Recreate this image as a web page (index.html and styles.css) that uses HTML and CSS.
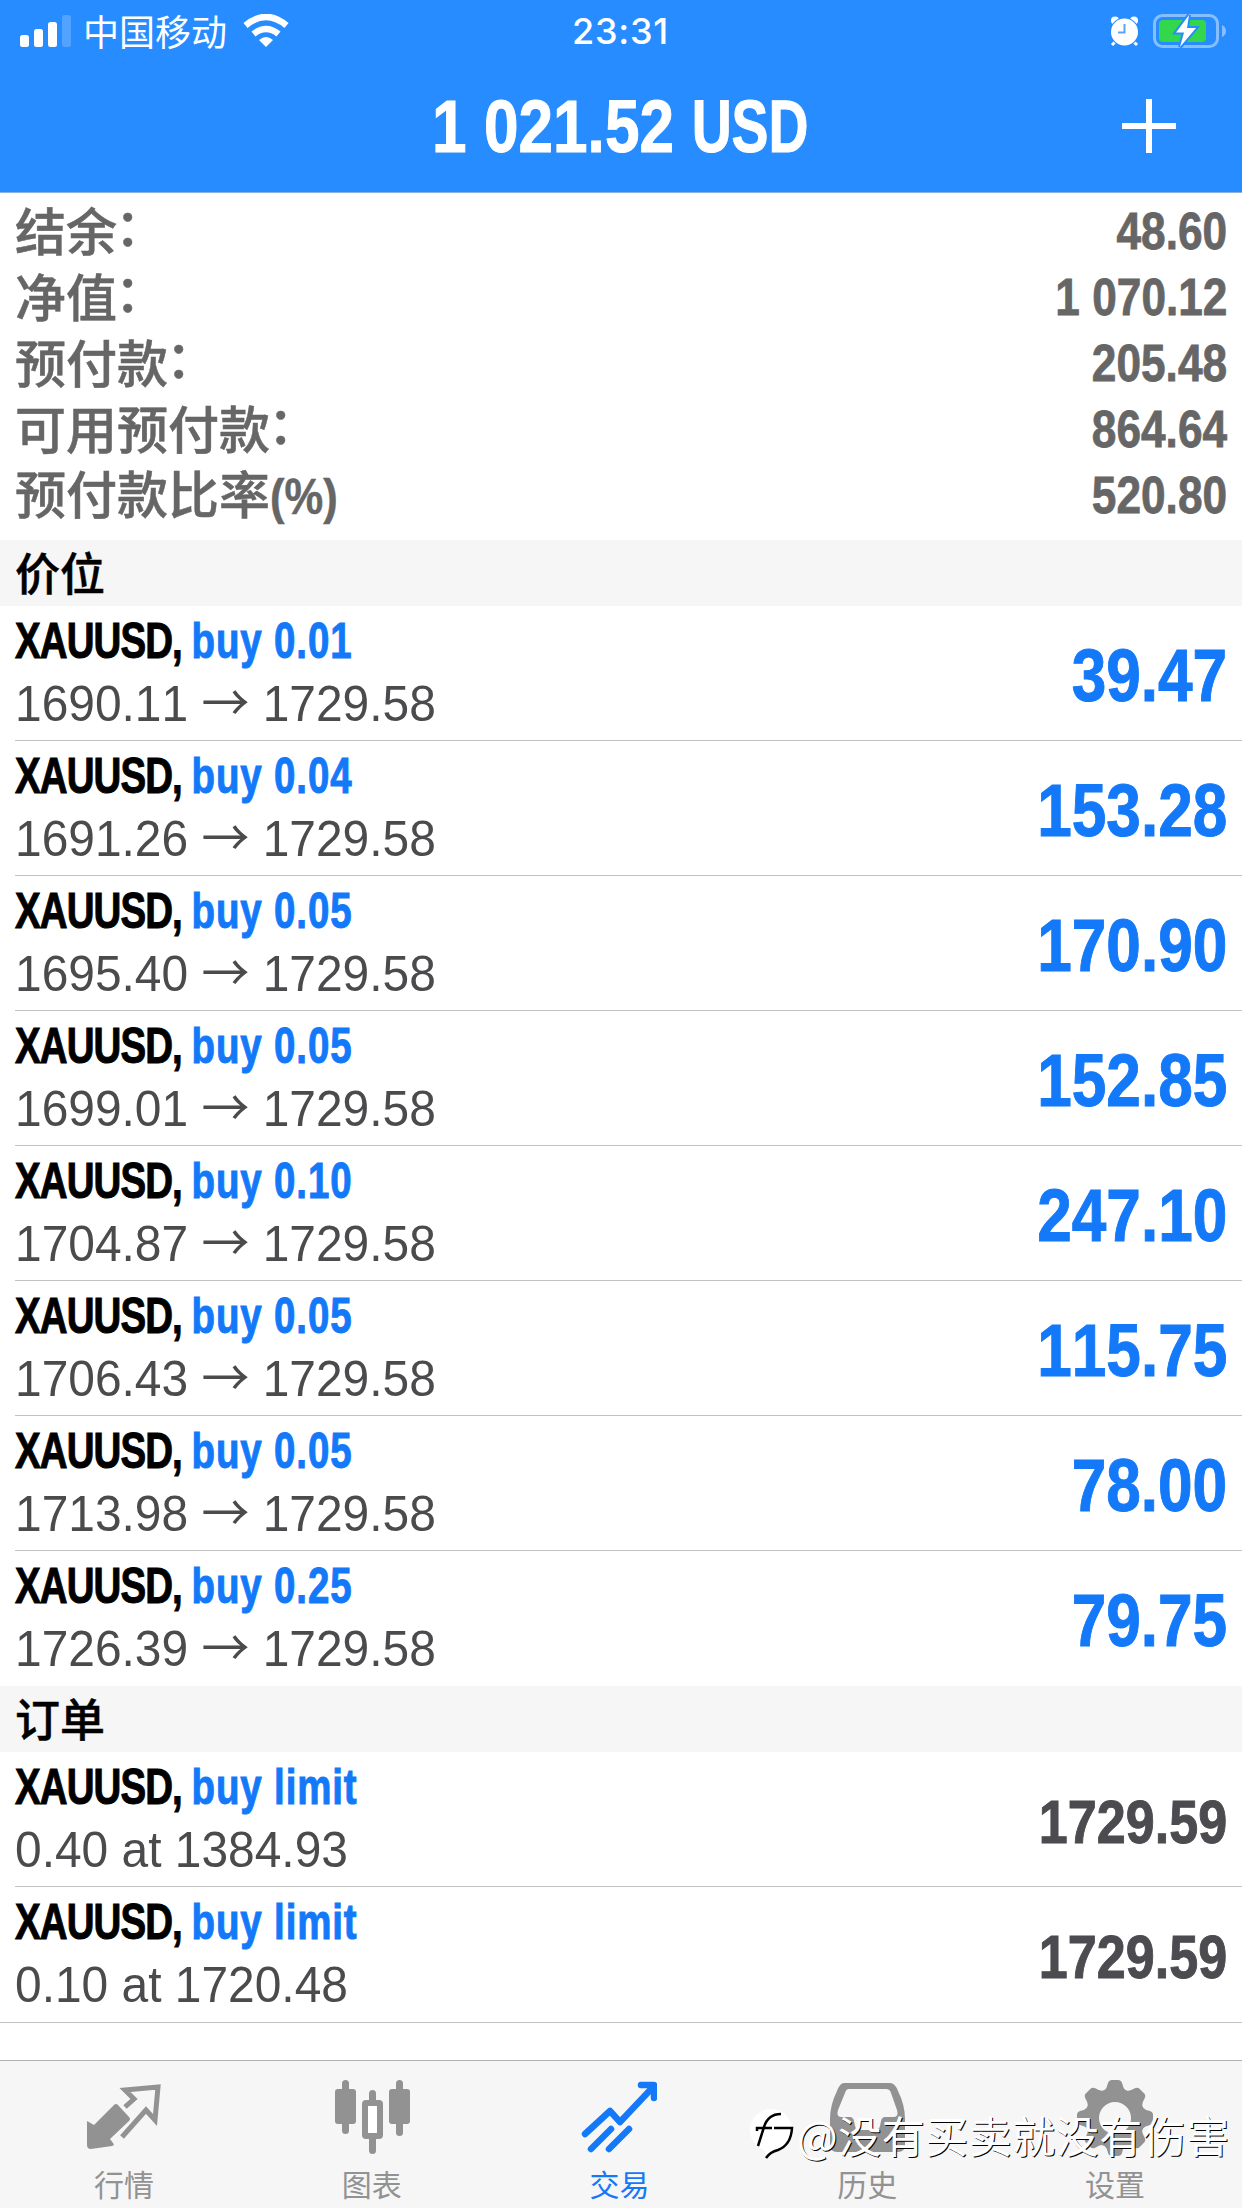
FILE: index.html
```
<!DOCTYPE html>
<html lang="zh-CN">
<head>
  <meta charset="utf-8">
  <meta name="viewport" content="width=device-width, initial-scale=1.0">
  <title>交易</title>
  <link rel="stylesheet" href="styles.css">
</head>
<body>
  <header class="header">
    <div class="status">
      <div class="status-left">
        <svg class="signal" width="52" height="33" viewBox="0 0 52 33" fill="#fff">
          <rect x="0" y="20" width="9" height="12" rx="2.5"/>
          <rect x="14" y="14" width="9" height="18" rx="2.5"/>
          <rect x="28" y="7" width="9" height="25" rx="2.5"/>
          <rect x="42" y="0" width="9" height="32" rx="2.5" opacity=".2"/>
        </svg>
        <span class="carrier">中国移动</span>
        <svg class="wifi" width="46" height="34" viewBox="0 0 46 34">
          <path d="M2.500 11.500Q23-5.500 43.500 11.500" fill="none" stroke="#fff" stroke-width="6.500"/>
          <path d="M10.500 20Q23 10 35.500 20" fill="none" stroke="#fff" stroke-width="6.500"/>
          <path d="M16 26Q23 20 30 26L23 33Z" fill="#fff"/>
        </svg>
      </div>
      <span class="clock">23:31</span>
      <div class="status-right">
        <svg class="alarm" width="29" height="31" viewBox="0 0 29 31">
          <path d="M5 26l-3 3M24 26l3 3" stroke="#fff" stroke-width="3"/>
          <circle cx="5" cy="4.500" r="4" fill="#fff"/>
          <circle cx="24" cy="4.500" r="4" fill="#fff"/>
          <circle cx="14.500" cy="16" r="14.500" fill="#268cff"/>
          <circle cx="14.500" cy="16" r="13.500" fill="#fff"/>
          <path d="M14.500 8v8.500H8" fill="none" stroke="#5aa4f5" stroke-width="2"/>
        </svg>
        <svg class="battery" width="74" height="34" viewBox="0 0 74 34">
          <rect x="1.500" y="1.500" width="63" height="31" rx="8" fill="none" stroke="#85bfff" stroke-width="3"/>
          <path d="M69 11q4 2 4 6t-4 6z" fill="#85bfff"/>
          <rect x="6" y="6" width="47" height="22" rx="4" fill="#32d74b"/>
          <path d="M36 1L23 18.500h8L27 33l16-19H34z" fill="#fff" stroke="#268cff" stroke-width="4" paint-order="stroke"/>
        </svg>
      </div>
    </div>
    <div class="title-bar">
      <h1>1 021.52 <span>USD</span></h1>
      <svg class="plus" width="54" height="54" viewBox="0 0 54 54">
        <path d="M27 0v54M0 27h54" stroke="#fff" stroke-width="6"/>
      </svg>
    </div>
  </header>

  <section class="summary">
    <div><span>结余<s>：</s></span><b>48.60</b></div>
    <div><span>净值<s>：</s></span><b>1 070.12</b></div>
    <div><span>预付款<s>：</s></span><b>205.48</b></div>
    <div><span>可用预付款<s>：</s></span><b>864.64</b></div>
    <div><span>预付款比率<i>(%)</i></span><b>520.80</b></div>
  </section>

  <h2>价位</h2>
  <ul class="list">
    <li><div class="info"><p class="name">XAUUSD, <span>buy 0.01</span></p><p class="detail">1690.11 <em>→</em> 1729.58</p></div><span class="profit">39.47</span></li>
    <li><div class="info"><p class="name">XAUUSD, <span>buy 0.04</span></p><p class="detail">1691.26 <em>→</em> 1729.58</p></div><span class="profit">153.28</span></li>
    <li><div class="info"><p class="name">XAUUSD, <span>buy 0.05</span></p><p class="detail">1695.40 <em>→</em> 1729.58</p></div><span class="profit">170.90</span></li>
    <li><div class="info"><p class="name">XAUUSD, <span>buy 0.05</span></p><p class="detail">1699.01 <em>→</em> 1729.58</p></div><span class="profit">152.85</span></li>
    <li><div class="info"><p class="name">XAUUSD, <span>buy 0.10</span></p><p class="detail">1704.87 <em>→</em> 1729.58</p></div><span class="profit">247.10</span></li>
    <li><div class="info"><p class="name">XAUUSD, <span>buy 0.05</span></p><p class="detail">1706.43 <em>→</em> 1729.58</p></div><span class="profit">115.75</span></li>
    <li><div class="info"><p class="name">XAUUSD, <span>buy 0.05</span></p><p class="detail">1713.98 <em>→</em> 1729.58</p></div><span class="profit">78.00</span></li>
    <li><div class="info"><p class="name">XAUUSD, <span>buy 0.25</span></p><p class="detail">1726.39 <em>→</em> 1729.58</p></div><span class="profit">79.75</span></li>
  </ul>

  <h2>订单</h2>
  <ul class="list orders">
    <li><div class="info"><p class="name">XAUUSD, <span>buy limit</span></p><p class="detail">0.40 at 1384.93</p></div><span class="price">1729.59</span></li>
    <li><div class="info"><p class="name">XAUUSD, <span>buy limit</span></p><p class="detail">0.10 at 1720.48</p></div><span class="price">1729.59</span></li>
  </ul>

  <nav class="tabs">
    <a>
      <svg width="76" height="76" viewBox="0 0 76 76">
        <path d="M1 41v24q0 4 4 4l21-3q3-1 1-3l-3-4 19-18q2-2 0-4L32 25q-2-2-4 0L8 45z" fill="#929292"/>
        <path d="M39 27l9-8-9-9 33-3-3 33-9-10-24 27" fill="none" stroke="#929292" stroke-width="5"/>
      </svg>
      行情
    </a>
    <a>
      <svg width="76" height="76" viewBox="0 0 76 76" fill="#929292">
        <rect x="8" y="0" width="7" height="54" rx="3.500"/>
        <rect x="1" y="9" width="21" height="35" rx="3"/>
        <rect x="35" y="10" width="7" height="20" rx="3.500"/>
        <rect x="35" y="50" width="7" height="24" rx="3.500"/>
        <rect x="31" y="23" width="15" height="33" rx="1" fill="#fff" stroke="#929292" stroke-width="6"/>
        <rect x="62" y="0" width="7" height="56" rx="3.500"/>
        <rect x="55" y="9" width="21" height="35" rx="3"/>
      </svg>
      图表
    </a>
    <a class="active">
      <svg width="76" height="76" viewBox="0 0 76 76" fill="none" stroke="#1379f8" stroke-width="6.500" stroke-linecap="round" stroke-linejoin="round">
        <path d="M4 54l25-23 10 11 34-36M60 5h13v13" />
        <path d="M10 69l20-20M28 69l20-20"/>
      </svg>
      交易
    </a>
    <a>
      <svg width="76" height="76" viewBox="0 0 76 76">
        <path d="M15 3h46q5 0 8 8 7 14 7 28v26q0 7-7 7H8q-7 0-7-7V39Q1 25 8 11q3-8 7-8z" fill="#929292"/>
        <path d="M20 9h37q4 0 5 4l6 17q2 7-3 7h-9q-3 0-4 4l-1 5q-1 4-5 4H31q-4 0-5-4l-1-5q-1-4-4-4h-9q-5 0-3-7l7-17q1-4 4-4z" fill="#f6f6f6"/>
      </svg>
      历史
    </a>
    <a>
      <svg width="76" height="76" viewBox="0 0 76 76">
        <g fill="#929292">
          <circle cx="38" cy="38" r="30"/>
          <g id="teeth">
            <path id="tooth" d="M27 11q3-3 4-8 1-3 4-3h6q3 0 4 3 1 5 4 8z"/>
            <use href="#tooth" transform="rotate(45 38 38)"/>
            <use href="#tooth" transform="rotate(90 38 38)"/>
            <use href="#tooth" transform="rotate(135 38 38)"/>
          </g>
          <use href="#teeth" transform="rotate(180 38 38)"/>
        </g>
        <circle cx="38" cy="38" r="16" fill="#f6f6f6"/>
      </svg>
      设置
    </a>
  </nav>

  <div class="watermark">
    <svg width="44" height="50" viewBox="0 0 44 50">
      <circle cx="21" cy="21" r="21" fill="#fff"/>
      <path d="M12 34l14 4-10 8z" fill="#fff"/>
      <path d="M8 37l6-19Q18 5 31 5M7 22v-3h15M24 19h18q-1 17-14 22-8 2-12 8" fill="none" stroke="#000" stroke-width="2.500"/>
    </svg>
    <span>@没有买卖就没有伤害</span>
  </div>
</body>
</html>
```
FILE: styles.css
```
* {
  box-sizing: border-box;
  margin: 0;
  padding: 0;
}

body {
  position: relative;
  display: flex;
  flex-direction: column;
  width: 1242px;
  height: 2208px;
  overflow: hidden;
  background-color: #fff;
  font-family: "Liberation Sans", "Noto Sans CJK SC", sans-serif;
  font-kerning: none;
}

.header {
  height: 193px;
  background-color: #268cff;
  border-bottom: 1px solid #8ab0dc;
  color: #fff;
}

.status {
  display: grid;
  grid-template-columns: 1fr auto 1fr;
  height: 60px;
  padding: 0 15px 0 20px;
  align-items: center;
}

.status-left,
.status-right {
  display: flex;
  align-items: center;
}

.status-right {
  justify-content: flex-end;
  gap: 14px;
}

.carrier {
  margin: 0 16px 0 11px;
  font: 400 36px/58px "Noto Sans CJK SC", sans-serif;
  padding-bottom: 2px;
}

.clock {
  padding-right: 6px;
  font: 500 36px/62px "Inter", sans-serif;
  letter-spacing: .8px;
}

.title-bar {
  display: grid;
  grid-template-columns: 1fr auto 1fr;
  height: 130px;
  padding-right: 66px;
  padding-left: 66px;
  align-items: center;
}

.title-bar h1 {
  grid-column: 2;
  padding: 2px 4px 0 0;
  font-size: 74px;
  line-height: 130px;
  transform: scaleX(.84);
  -webkit-text-stroke: 1px;
}

.title-bar h1 span {
  display: inline-block;
  margin-right: -18px;
  transform: scaleX(.89);
  transform-origin: left;
}

.plus {
  justify-self: end;
}

.summary {
  height: 347px;
  padding: 4px 15px 0 15px;
  color: #666;
}

.summary div {
  display: flex;
  height: 66px;
  justify-content: space-between;
  align-items: center;
}

.summary span {
  font: 500 51px/64px "Noto Sans CJK SC", sans-serif;
  padding-bottom: 2px;
  -webkit-text-stroke: .5px;
}

.summary s {
  display: inline-block;
  margin-left: -2px;
  text-decoration: none;
  transform: translateY(-5px);
}

.summary i {
  display: inline-block;
  font: bold 50px/60px "Liberation Sans", sans-serif;
  transform: scaleX(.87);
  transform-origin: left;
}

.summary b {
  padding-top: 2px;
  font-size: 52px;
  transform: scaleX(.85);
  transform-origin: right;
  -webkit-text-stroke: .8px;
}

h2 {
  height: 66px;
  padding-left: 15px;
  background-color: #f6f6f6;
  font: 500 45px/63px "Noto Sans CJK SC", sans-serif;
  -webkit-text-stroke: .5px;
}

.list {
  padding-left: 15px;
  list-style: none;
}

.list li {
  display: flex;
  height: 135px;
  padding-right: 15px;
  border-bottom: 1px solid #c3c3c6;
  justify-content: space-between;
  align-items: center;
}

.list li:last-child {
  border-bottom-color: transparent;
}

.orders {
  height: 271px;
  border-bottom: 1px solid #c3c3c6;
  margin-bottom: 37px;
}

.name,
.detail {
  font-size: 50px;
  line-height: 63px;
  white-space: pre;
  transform-origin: left;
}

.name {
  font-weight: bold;
  letter-spacing: -1.2px;
  transform: scaleX(.77);
  -webkit-text-stroke: 1px;
}

.name span {
  color: #1379f8;
  letter-spacing: 1.1px;
}

.detail {
  color: #4b4b4d;
  transform: scaleX(.958);
}

.detail em {
  font: 400 50px/50px "Noto Sans CJK SC", sans-serif;
}

.profit,
.price {
  padding-top: 4px;
  font-weight: bold;
  transform-origin: right;
  transform: scaleX(.84);
  -webkit-text-stroke: 1px;
}

.profit {
  color: #1379f8;
  font-size: 74px;
}

.price {
  color: #4b4b50;
  font-size: 62px;
}

.tabs {
  display: grid;
  grid-template-columns: repeat(5, 1fr);
  height: 148px;
  padding-right: 3px;
  border-top: 1px solid #b0b2b1;
  background-color: #f6f6f6;
}

.tabs a {
  display: flex;
  flex-direction: column;
  padding-top: 19px;
  align-items: center;
  color: #929292;
  font: 30px/55px "Noto Sans CJK SC", sans-serif;
}

.tabs .active {
  color: #1379f8;
}

.watermark {
  position: absolute;
  left: 750px;
  top: 2104px;
  display: flex;
  align-items: center;
  gap: 3px;
  color: #fff;
  font: 400 43px/60px "Noto Sans CJK SC", sans-serif;
  letter-spacing: .5px;
  text-shadow: 1px 1px 0 #000;
  white-space: nowrap;
}
```
